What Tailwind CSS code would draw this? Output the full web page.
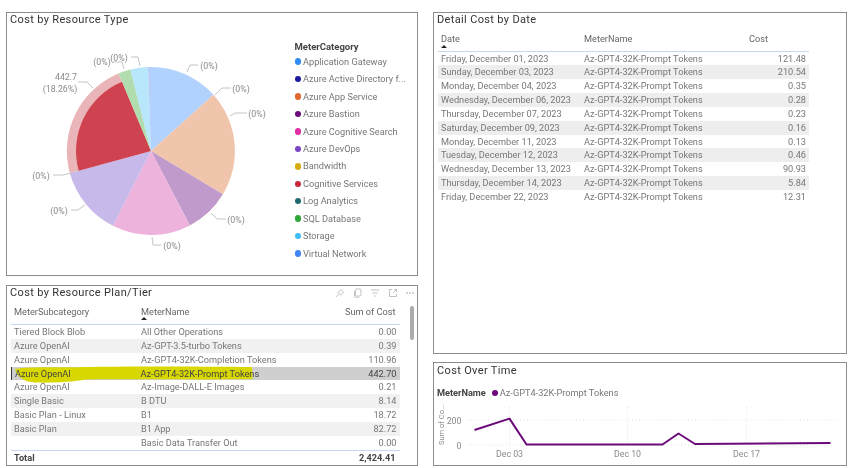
<!DOCTYPE html>
<html>
<head>
<title>Cost report</title>
<script src="https://cdn.jsdelivr.net/npm/@tailwindcss/browser@4"></script>
</head>
<body class="bg-white overflow-hidden font-['Roboto',sans-serif] text-[9.2px] text-[#777] whitespace-nowrap">
<div class="flex gap-[15px] pl-[6px] pt-[12px] w-[850px] h-[468px] blur-[0.3px]">

  <!-- left column -->
  <div class="flex flex-col gap-[9px] w-[412px]">
    <div class="h-[264px] border-[1.5px] border-[#8c8c8c] flex flex-col">
      <div class="h-[18px] pl-[3px] text-[11px] leading-[14px] tracking-[0.35px] text-[#333]">Cost by Resource Type</div>
      <div class="flex">
        <svg class="w-[280px] h-[243px] shrink-0 text-[8.8px]" viewBox="7 31 280 243">
          <path d="M151 151 L151 67 A84 84 0 0 1 213.4 94.8 Z" fill="#b0d2fd"/>
          <path d="M151 151 L213.4 94.8 A84 84 0 0 1 222.9 194.3 Z" fill="#f1c4ac"/>
          <path d="M151 151 L222.9 194.3 A84 84 0 0 1 189.9 225.4 Z" fill="#bf9aca"/>
          <path d="M151 151 L189.9 225.4 A84 84 0 0 1 112.9 225.8 Z" fill="#edb3dc"/>
          <path d="M151 151 L112.9 225.8 A84 84 0 0 1 69.8 173.1 Z" fill="#c7b9e9"/>
          <path d="M151 151 L69.8 173.1 A84 84 0 0 1 118.6 73.5 Z" fill="#e9b5b8"/>
          <path d="M151 151 L78.7 170.8 A75 75 0 0 1 122 81.8 Z" fill="#cf424f"/>
          <path d="M151 151 L118.6 73.5 A84 84 0 0 1 130.4 69.6 Z" fill="#b0dcae"/>
          <path d="M151 151 L130.4 69.6 A84 84 0 0 1 148 67 Z" fill="#b8e6fb"/>
          <path d="M151 151 L148 67 A84 84 0 0 1 151 67 Z" fill="#b9cdfb"/>
          <g fill="none" stroke="#b5b5b5" stroke-width="0.8">
            <path d="M187 72 L190 65 L198 65"/>
            <path d="M215 95 L222 88 L231 88"/>
            <path d="M230 116 L235 113 L247 113"/>
            <path d="M211 213 L217 219 L226 219"/>
            <path d="M152 237 L153 245 L161 245"/>
            <path d="M71 173 L63 175 L53 175"/>
            <path d="M85 205 L78 210 L71 210"/>
            <path d="M93 88 L87 82 L78 82"/>
            <path d="M124 69 L122 62 L113 62"/>
            <path d="M140 66 L138 57 L131 57"/>
          </g>
          <g fill="#8a8a8a" text-anchor="middle">
            <text x="209" y="69">(0%)</text>
            <text x="241" y="92">(0%)</text>
            <text x="257" y="117">(0%)</text>
            <text x="236" y="223">(0%)</text>
            <text x="172" y="249">(0%)</text>
            <text x="41" y="179">(0%)</text>
            <text x="59" y="214">(0%)</text>
            <text x="66" y="80">442.7</text>
            <text x="60" y="92">(18.26%)</text>
            <text x="102" y="65">(0%)</text>
            <text x="119" y="61">(0%)</text>
          </g>
        </svg>
        <div class="flex flex-col pt-[10px] pl-[7.5px]">
          <div class="h-[12px] leading-[12px] font-bold text-[#444] text-[9.5px]">MeterCategory</div>
          <div class="flex items-center h-[17.45px]"><span class="w-[6.5px] h-[6.5px] rounded-full bg-[#2f8cf5] mr-[2px]"></span>Application Gateway</div>
          <div class="flex items-center h-[17.45px]"><span class="w-[6.5px] h-[6.5px] rounded-full bg-[#1a1a9c] mr-[2px]"></span>Azure Active Directory f...</div>
          <div class="flex items-center h-[17.45px]"><span class="w-[6.5px] h-[6.5px] rounded-full bg-[#e0672f] mr-[2px]"></span>Azure App Service</div>
          <div class="flex items-center h-[17.45px]"><span class="w-[6.5px] h-[6.5px] rounded-full bg-[#6b0a78] mr-[2px]"></span>Azure Bastion</div>
          <div class="flex items-center h-[17.45px]"><span class="w-[6.5px] h-[6.5px] rounded-full bg-[#e02fa5] mr-[2px]"></span>Azure Cognitive Search</div>
          <div class="flex items-center h-[17.45px]"><span class="w-[6.5px] h-[6.5px] rounded-full bg-[#7a44c4] mr-[2px]"></span>Azure DevOps</div>
          <div class="flex items-center h-[17.45px]"><span class="w-[6.5px] h-[6.5px] rounded-full bg-[#d9ac0d] mr-[2px]"></span>Bandwidth</div>
          <div class="flex items-center h-[17.45px]"><span class="w-[6.5px] h-[6.5px] rounded-full bg-[#c4283a] mr-[2px]"></span>Cognitive Services</div>
          <div class="flex items-center h-[17.45px]"><span class="w-[6.5px] h-[6.5px] rounded-full bg-[#1d6a70] mr-[2px]"></span>Log Analytics</div>
          <div class="flex items-center h-[17.45px]"><span class="w-[6.5px] h-[6.5px] rounded-full bg-[#2ea83a] mr-[2px]"></span>SQL Database</div>
          <div class="flex items-center h-[17.45px]"><span class="w-[6.5px] h-[6.5px] rounded-full bg-[#3fbdf5] mr-[2px]"></span>Storage</div>
          <div class="flex items-center h-[17.45px]"><span class="w-[6.5px] h-[6.5px] rounded-full bg-[#4285f4] mr-[2px]"></span>Virtual Network</div>
        </div>
      </div>
    </div>

    <div class="relative h-[181px] border-[1.5px] border-[#8c8c8c] flex flex-col">
      <div class="flex items-center justify-between h-[14px] pl-[3px]">
        <span class="text-[11px] leading-[14px] tracking-[0.35px] text-[#333]">Cost by Resource Plan/Tier</span>
        <div class="flex gap-[7.5px] pr-[2px] text-[#b5b5b5]">
          <svg class="w-[10px] h-[10px]" viewBox="0 0 10 10" fill="none" stroke="currentColor" stroke-width="0.8"><path d="M1 9 L3.7 6.3 M2.5 4.2 L5.8 7.5 M3 4.5 L6 1.5 L8.5 4 L5.5 7"/></svg>
          <svg class="w-[10px] h-[10px]" viewBox="0 0 10 10" fill="none" stroke="currentColor" stroke-width="0.8"><rect x="2.5" y="1" width="5.5" height="7" rx="1"/><path d="M1.5 3 V8.5 Q1.5 9.3 2.5 9.3 H6"/></svg>
          <svg class="w-[10px] h-[10px]" viewBox="0 0 10 10" fill="none" stroke="currentColor" stroke-width="0.8"><path d="M1 2 H9 M2.5 5 H7.5 M4 8 H6"/></svg>
          <svg class="w-[10px] h-[10px]" viewBox="0 0 10 10" fill="none" stroke="currentColor" stroke-width="0.8"><path d="M4 1.5 H1.5 V8.5 H8.5 V6 M6 1.5 H8.5 V4 M8.5 1.5 L5 5"/></svg>
          <svg class="w-[10px] h-[10px] text-[#888]" viewBox="0 0 10 10" fill="currentColor"><circle cx="2" cy="5" r="0.7"/><circle cx="5" cy="5" r="0.7"/><circle cx="8" cy="5" r="0.7"/></svg>
        </div>
      </div>
      <div class="flex flex-col ml-[3.5px] w-[389px] mt-[1px]">
        <div class="flex h-[24px] pt-[4px] border-b-[1.5px] border-[#c7d6f2] text-[#666]">
          <div class="w-[127px] pl-[3.5px]">MeterSubcategory</div>
          <div class="relative flex-1 pl-[3.5px]">MeterName<span class="absolute left-[3.5px] top-[12px] w-0 h-0 border-x-[3px] border-x-transparent border-b-[3px] border-b-[#222]"></span></div>
          <div class="w-[80px] text-right pr-[4px]">Sum of Cost</div>
        </div>
        <div class="flex h-[13.85px] items-center"><div class="w-[127px] pl-[3.5px]">Tiered Block Blob</div><div class="flex-1 pl-[3.5px]">All Other Operations</div><div class="w-[80px] text-right pr-[3px]">0.00</div></div>
        <div class="flex h-[13.85px] items-center bg-[#f1f1f1]"><div class="w-[127px] pl-[3.5px]">Azure OpenAI</div><div class="flex-1 pl-[3.5px]">Az-GPT-3.5-turbo Tokens</div><div class="w-[80px] text-right pr-[3px]">0.39</div></div>
        <div class="flex h-[13.85px] items-center"><div class="w-[127px] pl-[3.5px]">Azure OpenAI</div><div class="flex-1 pl-[3.5px]">Az-GPT4-32K-Completion Tokens</div><div class="w-[80px] text-right pr-[3px]">110.96</div></div>
        <div class="flex h-[13.85px] items-center bg-[#cfcfcf] text-[#444] border-l-[1.5px] border-[#333]"><div class="relative z-[2] w-[125.5px] pl-[3.5px]">Azure OpenAI</div><div class="relative z-[2] flex-1 pl-[3.5px]">Az-GPT4-32K-Prompt Tokens</div><div class="w-[80px] text-right pr-[3px]">442.70</div></div>
        <div class="flex h-[13.85px] items-center"><div class="relative z-[2] w-[127px] pl-[3.5px]">Azure OpenAI</div><div class="flex-1 pl-[3.5px]">Az-Image-DALL-E Images</div><div class="w-[80px] text-right pr-[3px]">0.21</div></div>
        <div class="flex h-[13.85px] items-center bg-[#f1f1f1]"><div class="w-[127px] pl-[3.5px]">Single Basic</div><div class="flex-1 pl-[3.5px]">B DTU</div><div class="w-[80px] text-right pr-[3px]">8.14</div></div>
        <div class="flex h-[13.85px] items-center"><div class="w-[127px] pl-[3.5px]">Basic Plan - Linux</div><div class="flex-1 pl-[3.5px]">B1</div><div class="w-[80px] text-right pr-[3px]">18.72</div></div>
        <div class="flex h-[13.85px] items-center bg-[#f1f1f1]"><div class="w-[127px] pl-[3.5px]">Basic Plan</div><div class="flex-1 pl-[3.5px]">B1 App</div><div class="w-[80px] text-right pr-[3px]">82.72</div></div>
        <div class="flex h-[13.85px] items-center"><div class="w-[127px] pl-[3.5px]"></div><div class="flex-1 pl-[3.5px]">Basic Data Transfer Out</div><div class="w-[80px] text-right pr-[3px]">0.00</div></div>
        <div class="flex h-[16px] items-center border-t-[1.5px] border-[#c7d6f2] font-bold text-[#444]"><div class="w-[127px] pl-[3.5px]">Total</div><div class="flex-1"></div><div class="w-[80px] text-right pr-[4px]">2,424.41</div></div>
      </div>
      <!-- scrollbar -->
      <div class="absolute left-[403px] top-[20px] w-[4px] h-[34px] rounded-full bg-[#ababab]"></div>
      <!-- yellow marker stroke, sits under the row text -->
      <svg class="absolute z-[1] left-[6px] top-[78px] w-[250px] h-[20px]" viewBox="0 0 250 20"><path d="M2 5 C20 2 50 4 70 3 C120 2 190 2.5 239 3 L239.5 15 C190 16 150 15 72 15.5 C60 18 40 19 22 18.5 C10 18 4 12 2 5 Z" fill="#d8d800"/></svg>
    </div>
  </div>

  <!-- right column -->
  <div class="flex flex-col gap-[8px] w-[414px]">
    <div class="h-[342px] border-[1.5px] border-[#8c8c8c] flex flex-col">
      <div class="h-[14px] pl-[3px] text-[11px] leading-[14px] tracking-[0.35px] text-[#333]">Detail Cost by Date</div>
      <div class="flex flex-col ml-[4px] w-[371px] mt-[4px]">
        <div class="relative flex h-[20.5px] pt-[1px] text-[#666]">
          <div class="w-[146px] pl-[3px]">Date</div>
          <div class="w-[165px]">MeterName</div>
          <div>Cost</div>
          <span class="absolute left-[3px] top-[14px] w-0 h-0 border-x-[3px] border-x-transparent border-b-[3px] border-b-[#222]"></span>
          <span class="absolute left-0 right-0 bottom-0 h-px bg-[#c7d6f2]"></span>
        </div>
        <div class="flex h-[13.85px] items-center"><div class="w-[146px] pl-[3px]">Friday, December 01, 2023</div><div class="flex-1">Az-GPT4-32K-Prompt Tokens</div><div class="pr-[3px]">121.48</div></div>
        <div class="flex h-[13.85px] items-center bg-[#eeeeee]"><div class="w-[146px] pl-[3px]">Sunday, December 03, 2023</div><div class="flex-1">Az-GPT4-32K-Prompt Tokens</div><div class="pr-[3px]">210.54</div></div>
        <div class="flex h-[13.85px] items-center"><div class="w-[146px] pl-[3px]">Monday, December 04, 2023</div><div class="flex-1">Az-GPT4-32K-Prompt Tokens</div><div class="pr-[3px]">0.35</div></div>
        <div class="flex h-[13.85px] items-center bg-[#eeeeee]"><div class="w-[146px] pl-[3px]">Wednesday, December 06, 2023</div><div class="flex-1">Az-GPT4-32K-Prompt Tokens</div><div class="pr-[3px]">0.28</div></div>
        <div class="flex h-[13.85px] items-center"><div class="w-[146px] pl-[3px]">Thursday, December 07, 2023</div><div class="flex-1">Az-GPT4-32K-Prompt Tokens</div><div class="pr-[3px]">0.23</div></div>
        <div class="flex h-[13.85px] items-center bg-[#eeeeee]"><div class="w-[146px] pl-[3px]">Saturday, December 09, 2023</div><div class="flex-1">Az-GPT4-32K-Prompt Tokens</div><div class="pr-[3px]">0.16</div></div>
        <div class="flex h-[13.85px] items-center"><div class="w-[146px] pl-[3px]">Monday, December 11, 2023</div><div class="flex-1">Az-GPT4-32K-Prompt Tokens</div><div class="pr-[3px]">0.13</div></div>
        <div class="flex h-[13.85px] items-center bg-[#eeeeee]"><div class="w-[146px] pl-[3px]">Tuesday, December 12, 2023</div><div class="flex-1">Az-GPT4-32K-Prompt Tokens</div><div class="pr-[3px]">0.46</div></div>
        <div class="flex h-[13.85px] items-center"><div class="w-[146px] pl-[3px]">Wednesday, December 13, 2023</div><div class="flex-1">Az-GPT4-32K-Prompt Tokens</div><div class="pr-[3px]">90.93</div></div>
        <div class="flex h-[13.85px] items-center bg-[#eeeeee]"><div class="w-[146px] pl-[3px]">Thursday, December 14, 2023</div><div class="flex-1">Az-GPT4-32K-Prompt Tokens</div><div class="pr-[3px]">5.84</div></div>
        <div class="flex h-[13.85px] items-center"><div class="w-[146px] pl-[3px]">Friday, December 22, 2023</div><div class="flex-1">Az-GPT4-32K-Prompt Tokens</div><div class="pr-[3px]">12.31</div></div>
      </div>
    </div>

    <div class="h-[104px] border-[1.5px] border-[#8c8c8c] flex flex-col">
      <div class="h-[14px] mt-[1px] pl-[3px] text-[11px] leading-[14px] tracking-[0.35px] text-[#333]">Cost Over Time</div>
      <div class="flex items-center h-[12px] mt-[9px] pl-[3px]">
        <span class="font-bold text-[#444] mr-[6px]">MeterName</span>
        <span class="w-[6px] h-[6px] rounded-full bg-[#6b0a78] mr-[2px]"></span>
        <span>Az-GPT4-32K-Prompt Tokens</span>
      </div>
      <svg class="w-[411px] h-[65px] text-[8.8px]" viewBox="434.5 400 411 65">
        <g stroke="#dcdcdc" stroke-width="0.8" stroke-dasharray="1 2.5" fill="none">
          <path d="M468 421 H836 M468 446 H836"/>
          <path d="M510 408 V446 M628 408 V446 M747 408 V446"/>
        </g>
        <path d="M475 431 L510 419.6 L527 445.5 L663 445.5 L679 434.5 L695.5 445 L831 444" fill="none" stroke="#6b0a78" stroke-width="2" stroke-linejoin="round"/>
        <g fill="#8a8a8a">
          <text x="462" y="424.5" text-anchor="end">200</text>
          <text x="462" y="449.5" text-anchor="end">0</text>
          <text x="510" y="457.5" text-anchor="middle">Dec 03</text>
          <text x="628" y="457.5" text-anchor="middle">Dec 10</text>
          <text x="747" y="457.5" text-anchor="middle">Dec 17</text>
          <text transform="translate(444 446) rotate(-90)" class="text-[7.5px]">Sum of Co...</text>
        </g>
      </svg>
    </div>
  </div>

</div>
</body>
</html>
